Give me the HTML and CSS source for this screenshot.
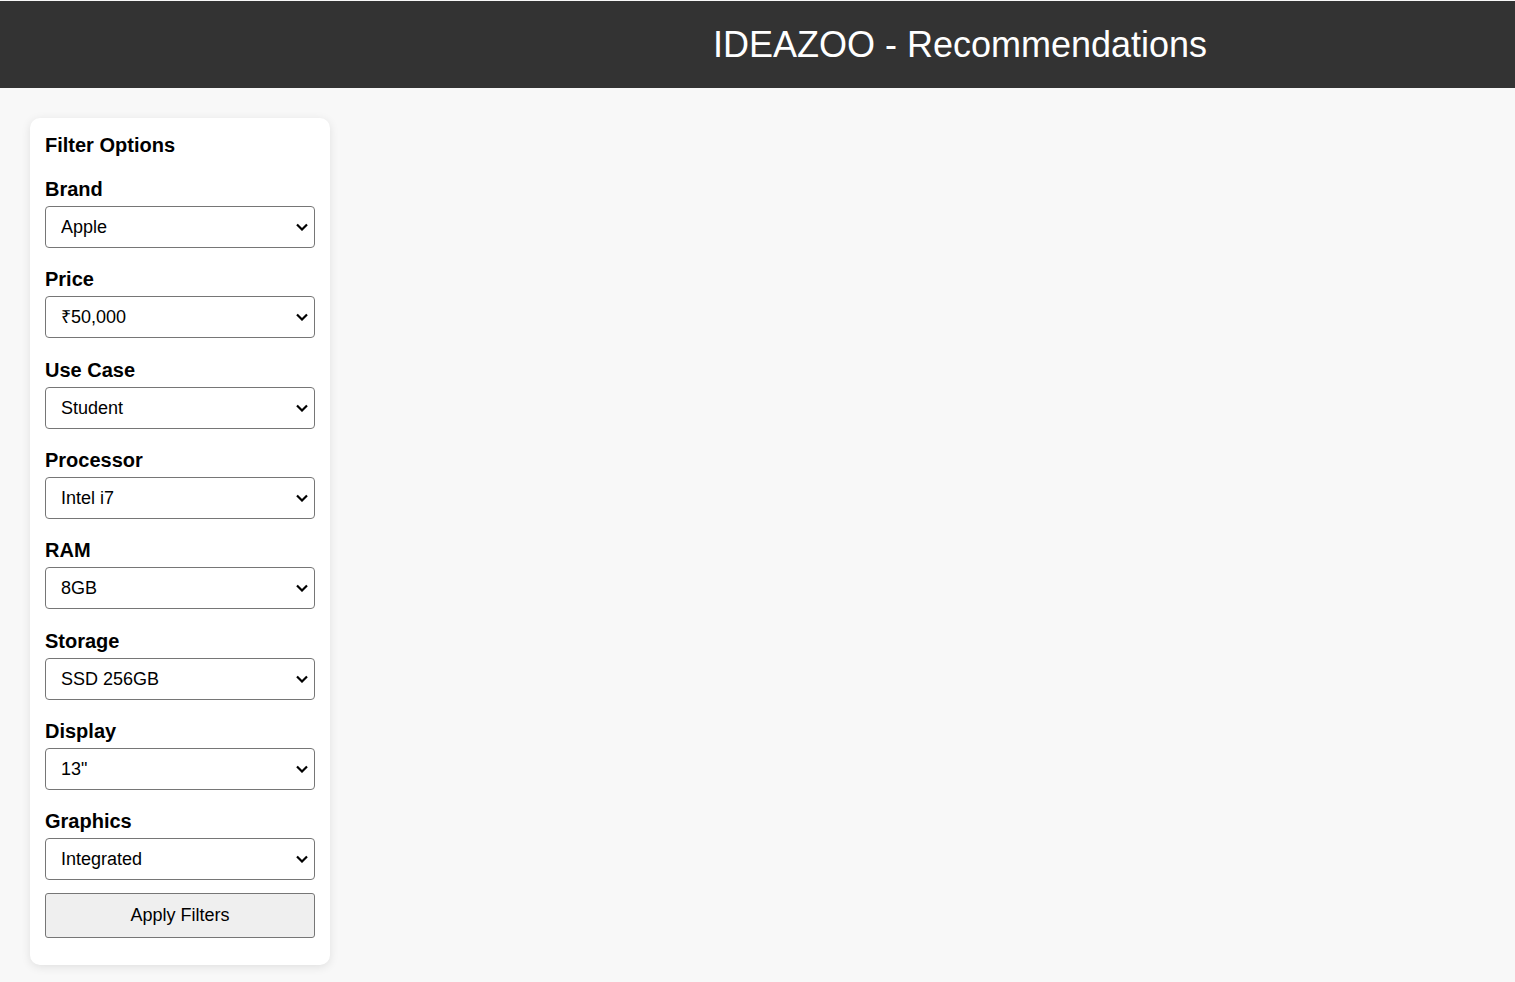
FILE: index.html
```html
<!DOCTYPE html>
<html lang="en">
<head>
<meta charset="utf-8">
<title>IDEAZOO - Recommendations</title>
<link rel="stylesheet" href="styles.css">
</head>
<body>
<header class="topbar">
  <h1 class="title">IDEAZOO - Recommendations</h1>
</header>
<main class="layout">
  <aside class="filters">
    <h3 class="filters-title">Filter Options</h3>
    <div class="field">
      <label class="field-label" for="brand">Brand</label>
      <div class="select-wrap">
        <select class="field-select" id="brand"><option>Apple</option><option>Dell</option><option>HP</option></select>
        <svg class="chevron" width="12" height="8" viewBox="0 0 12 8"><polyline points="1,1.5 6,6.5 11,1.5" fill="none" stroke="#000" stroke-width="2.2"/></svg>
      </div>
    </div>
    <div class="field">
      <label class="field-label" for="price">Price</label>
      <div class="select-wrap">
        <select class="field-select" id="price"><option>₹50,000</option><option>₹75,000</option></select>
        <svg class="chevron" width="12" height="8" viewBox="0 0 12 8"><polyline points="1,1.5 6,6.5 11,1.5" fill="none" stroke="#000" stroke-width="2.2"/></svg>
      </div>
    </div>
    <div class="field">
      <label class="field-label" for="usecase">Use Case</label>
      <div class="select-wrap">
        <select class="field-select" id="usecase"><option>Student</option><option>Gaming</option></select>
        <svg class="chevron" width="12" height="8" viewBox="0 0 12 8"><polyline points="1,1.5 6,6.5 11,1.5" fill="none" stroke="#000" stroke-width="2.2"/></svg>
      </div>
    </div>
    <div class="field">
      <label class="field-label" for="processor">Processor</label>
      <div class="select-wrap">
        <select class="field-select" id="processor"><option>Intel i7</option><option>Intel i5</option></select>
        <svg class="chevron" width="12" height="8" viewBox="0 0 12 8"><polyline points="1,1.5 6,6.5 11,1.5" fill="none" stroke="#000" stroke-width="2.2"/></svg>
      </div>
    </div>
    <div class="field">
      <label class="field-label" for="ram">RAM</label>
      <div class="select-wrap">
        <select class="field-select" id="ram"><option>8GB</option><option>16GB</option></select>
        <svg class="chevron" width="12" height="8" viewBox="0 0 12 8"><polyline points="1,1.5 6,6.5 11,1.5" fill="none" stroke="#000" stroke-width="2.2"/></svg>
      </div>
    </div>
    <div class="field">
      <label class="field-label" for="storage">Storage</label>
      <div class="select-wrap">
        <select class="field-select" id="storage"><option>SSD 256GB</option><option>SSD 512GB</option></select>
        <svg class="chevron" width="12" height="8" viewBox="0 0 12 8"><polyline points="1,1.5 6,6.5 11,1.5" fill="none" stroke="#000" stroke-width="2.2"/></svg>
      </div>
    </div>
    <div class="field">
      <label class="field-label" for="display">Display</label>
      <div class="select-wrap">
        <select class="field-select" id="display"><option>13"</option><option>15"</option></select>
        <svg class="chevron" width="12" height="8" viewBox="0 0 12 8"><polyline points="1,1.5 6,6.5 11,1.5" fill="none" stroke="#000" stroke-width="2.2"/></svg>
      </div>
    </div>
    <div class="field">
      <label class="field-label" for="graphics">Graphics</label>
      <div class="select-wrap">
        <select class="field-select" id="graphics"><option>Integrated</option><option>Dedicated</option></select>
        <svg class="chevron" width="12" height="8" viewBox="0 0 12 8"><polyline points="1,1.5 6,6.5 11,1.5" fill="none" stroke="#000" stroke-width="2.2"/></svg>
      </div>
    </div>
    <button class="apply-btn" type="button">Apply Filters</button>
  </aside>
</main>
</body>
</html>
```
FILE: styles.css
```css
html, body {
  margin: 0;
  padding: 0;
}
body {
  background: #f8f8f8;
  font-family: "Liberation Sans", Arial, sans-serif;
  color: #000;
  padding-top: 1px;
}
.topbar {
  background: #333333;
  height: 87px;
  display: flex;
  align-items: center;
  justify-content: center;
  padding-left: 405px;
}
.title {
  margin: 0;
  color: #fff;
  font-weight: normal;
  font-size: 36px;
  line-height: 42px;
}
.layout {
  padding: 30px;
  display: flex;
  align-items: flex-start;
}
.filters {
  width: 300px;
  box-sizing: border-box;
  background: #fff;
  border-radius: 10px;
  box-shadow: 0 2px 10px rgba(0, 0, 0, 0.1);
  padding: 16px 15px 27px;
  display: flex;
  flex-direction: column;
}
.filters-title {
  margin: 0 0 21px;
  font-size: 20px;
  line-height: 23px;
  font-weight: bold;
}
.field {
  display: flex;
  flex-direction: column;
  margin-bottom: 20.33px;
}
.field:last-of-type {
  margin-bottom: 13px;
}
.field-label {
  font-size: 20px;
  line-height: 23px;
  font-weight: bold;
  margin-bottom: 5px;
}
.select-wrap {
  position: relative;
  width: 270px;
  height: 42px;
}
.field-select {
  -webkit-appearance: none;
  appearance: none;
  width: 270px;
  height: 42px;
  box-sizing: border-box;
  padding: 0 30px 0 15px;
  font-family: "Liberation Sans", Arial, sans-serif;
  font-size: 18px;
  color: #000;
  background: #fff;
  border: 1px solid #767676;
  border-radius: 4px;
}
.chevron {
  position: absolute;
  right: 7px;
  top: 17px;
  pointer-events: none;
}
.apply-btn {
  width: 270px;
  height: 45px;
  box-sizing: border-box;
  font-family: "Liberation Sans", Arial, sans-serif;
  font-size: 18px;
  color: #000;
  background: #efefef;
  border: 1px solid #767676;
  border-radius: 3px;
  padding: 0;
}
```
